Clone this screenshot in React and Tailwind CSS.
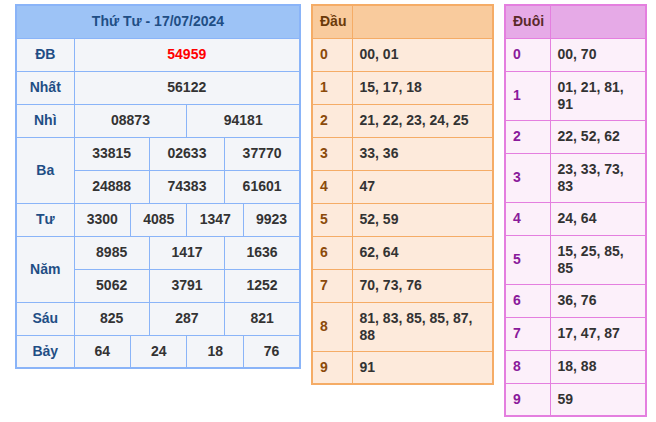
export default function App() {
  const f = { fontFamily: '"Liberation Sans", Arial, sans-serif' };
  const L = "border border-[#8ab4f8] text-center";
  const lab = L + " text-[#1f4e85] font-bold text-[14px]";
  const num = L + " text-[#333] font-bold text-[14px]";
  const dau = [["0","00, 01"],["1","15, 17, 18"],["2","21, 22, 23, 24, 25"],["3","33, 36"],["4","47"],["5","52, 59"],["6","62, 64"],["7","70, 73, 76"],["8","81, 83, 85, 85, 87, 88"],["9","91"]];
  const duoi = [["0","00, 70"],["1","01, 21, 81, 91"],["2","22, 52, 62"],["3","23, 33, 73, 83"],["4","24, 64"],["5","15, 25, 85, 85"],["6","36, 76"],["7","17, 47, 87"],["8","18, 88"],["9","59"]];
  return (
    <div className="w-[656px] h-[422px] bg-white flex items-start pt-[4px]" style={f}>
      <table className="ml-[15px] w-[286px] border-collapse border-2 border-[#8ab4f8] bg-[#f3f5f9] table-fixed">
        <colgroup><col className="w-[58px]" /><col /><col /><col /><col /><col /><col /><col /><col /><col /><col /><col /><col /></colgroup>
        <tbody>
          <tr className="h-[33px]"><td colSpan={13} className={L + " bg-[#9dc3f6] text-[#1f4e85] font-bold text-[14px]"}>Thứ Tư - 17/07/2024</td></tr>
          <tr className="h-[33px]"><td className={lab}>ĐB</td><td colSpan={12} className={L + " text-[#ff0000] font-bold text-[14px]"}>54959</td></tr>
          <tr className="h-[33px]"><td className={lab}>Nhất</td><td colSpan={12} className={num}>56122</td></tr>
          <tr className="h-[33px]"><td className={lab}>Nhì</td><td colSpan={6} className={num}>08873</td><td colSpan={6} className={num}>94181</td></tr>
          <tr className="h-[33px]"><td rowSpan={2} className={lab}>Ba</td><td colSpan={4} className={num}>33815</td><td colSpan={4} className={num}>02633</td><td colSpan={4} className={num}>37770</td></tr>
          <tr className="h-[33px]"><td colSpan={4} className={num}>24888</td><td colSpan={4} className={num}>74383</td><td colSpan={4} className={num}>61601</td></tr>
          <tr className="h-[33px]"><td className={lab}>Tư</td><td colSpan={3} className={num}>3300</td><td colSpan={3} className={num}>4085</td><td colSpan={3} className={num}>1347</td><td colSpan={3} className={num}>9923</td></tr>
          <tr className="h-[33px]"><td rowSpan={2} className={lab}>Năm</td><td colSpan={4} className={num}>8985</td><td colSpan={4} className={num}>1417</td><td colSpan={4} className={num}>1636</td></tr>
          <tr className="h-[33px]"><td colSpan={4} className={num}>5062</td><td colSpan={4} className={num}>3791</td><td colSpan={4} className={num}>1252</td></tr>
          <tr className="h-[33px]"><td className={lab}>Sáu</td><td colSpan={4} className={num}>825</td><td colSpan={4} className={num}>287</td><td colSpan={4} className={num}>821</td></tr>
          <tr className="h-[33px]"><td className={lab}>Bảy</td><td colSpan={3} className={num}>64</td><td colSpan={3} className={num}>24</td><td colSpan={3} className={num}>18</td><td colSpan={3} className={num}>76</td></tr>
        </tbody>
      </table>
      <table className="ml-[10px] w-[183px] border-collapse border-2 border-[#f5ac66] bg-[#fdeadb] table-fixed">
        <colgroup><col className="w-[40px]" /><col /></colgroup>
        <tbody>
          <tr className="h-[33px] bg-[#f9cb9d]"><td className="border border-[#f5ac66] px-[7px] text-[#6b3a0a] font-bold text-[14px]">Đầu</td><td className="border border-[#f5ac66]"></td></tr>
          {dau.map(([a,b]) => (
            <tr key={a} className="h-[33px]"><td className="border border-[#f5ac66] px-[7px] text-[#8b4a0a] font-bold text-[14px]">{a}</td><td className="border border-[#f5ac66] px-[7px] py-[7px] text-[#333] font-bold text-[14px] leading-[17px]">{b}</td></tr>
          ))}
        </tbody>
      </table>
      <table className="ml-[10px] w-[143px] border-collapse border-2 border-[#e47fdf] bg-[#fcf0fa] table-fixed">
        <colgroup><col className="w-[45px]" /><col /></colgroup>
        <tbody>
          <tr className="h-[33px] bg-[#e6aae7]"><td className="border border-[#e47fdf] px-[7px] text-[#5a2a2a] font-bold text-[14px]">Đuôi</td><td className="border border-[#e47fdf]"></td></tr>
          {duoi.map(([a,b]) => (
            <tr key={a} className="h-[33px]"><td className="border border-[#e47fdf] px-[7px] text-[#8a1a9a] font-bold text-[14px]">{a}</td><td className="border border-[#e47fdf] px-[7px] py-[7px] text-[#333] font-bold text-[14px] leading-[17px]">{b}</td></tr>
          ))}
        </tbody>
      </table>
    </div>
  );
}
